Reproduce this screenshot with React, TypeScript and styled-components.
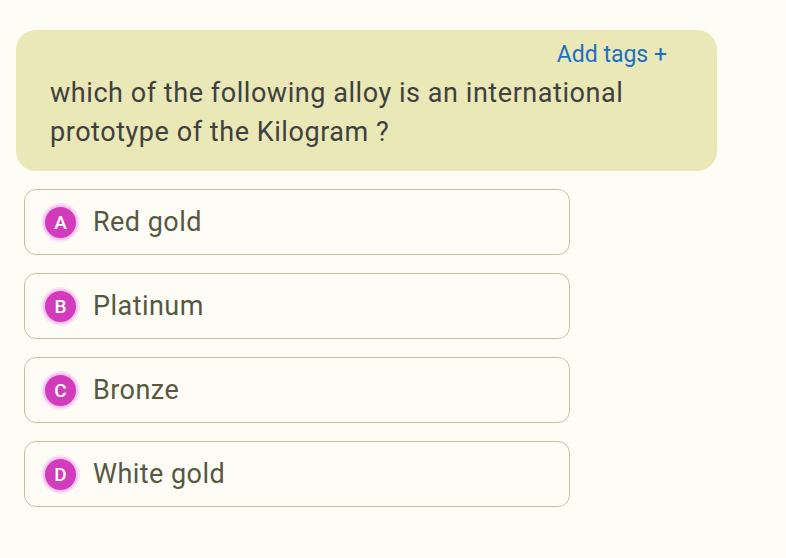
import React from "react";
import styled, { createGlobalStyle } from "styled-components";

const Global = createGlobalStyle`
  html, body { margin: 0; padding: 0; background: #fdfdf6; }
  body { font-family: Roboto, "Liberation Sans", sans-serif; }
`;

const Page = styled.div`
  padding: 30px 0 0 16px;
  display: flex;
  flex-direction: column;
  align-items: flex-start;
`;

const QuestionCard = styled.div`
  box-sizing: border-box;
  width: 701px;
  height: 141px;
  background: #e9e8b6;
  border-radius: 20px;
  padding: 10px 50px 0 34px;
  display: flex;
  flex-direction: column;
`;

const TagLink = styled.a`
  align-self: flex-end;
  color: #1b6fc6;
  font-size: 23px;
  line-height: 30px;
  cursor: pointer;
  text-decoration: none;
`;

const QuestionText = styled.p`
  margin: 4px 0 0;
  color: #404040;
  font-size: 27px;
  line-height: 39px;
  letter-spacing: 0.55px;
`;

const Options = styled.div`
  margin: 18px 0 0 8px;
  display: flex;
  flex-direction: column;
  gap: 18px;
`;

const Option = styled.div`
  box-sizing: border-box;
  width: 546px;
  height: 66px;
  border: 1.5px solid #c3c2a4;
  border-radius: 12px;
  display: flex;
  align-items: center;
  padding-left: 20px;
  gap: 17px;
`;

const Badge = styled.span`
  width: 31px;
  height: 31px;
  border-radius: 50%;
  background: #d23cbc;
  box-shadow: 0 0 0 2px #f4c4ec, 0 0 0 4px #fae4f6;
  color: #ffffff;
  font-size: 19px;
  font-weight: 500;
  display: flex;
  align-items: center;
  justify-content: center;
`;

const OptionLabel = styled.span`
  color: #58573f;
  font-size: 27px;
  letter-spacing: 0.45px;
`;

const options = [
  { key: "A", label: "Red gold" },
  { key: "B", label: "Platinum" },
  { key: "C", label: "Bronze" },
  { key: "D", label: "White gold" },
];

export default function App() {
  return (
    <>
      <Global />
      <Page>
        <QuestionCard>
          <TagLink>Add tags +</TagLink>
          <QuestionText>
            which of the following alloy is an international
            <br />
            prototype of the Kilogram ?
          </QuestionText>
        </QuestionCard>
        <Options>
          {options.map((o) => (
            <Option key={o.key}>
              <Badge>{o.key}</Badge>
              <OptionLabel>{o.label}</OptionLabel>
            </Option>
          ))}
        </Options>
      </Page>
    </>
  );
}
